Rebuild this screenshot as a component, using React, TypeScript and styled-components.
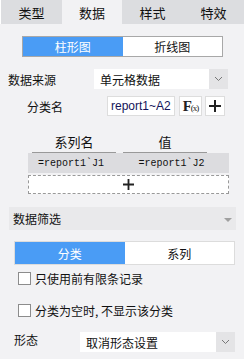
import React from 'react'
import styled, { createGlobalStyle } from 'styled-components'

const GlobalStyle = createGlobalStyle`
    html, body {
        margin: 0;
        padding: 0;
        background: #f2f2f4;
    }
    body {
        font-family: "Noto Sans CJK SC", "Noto Sans", sans-serif;
        font-size: 12px;
        color: #222;
    }
`

const BLUE = '#4a9cf5'

const Page = styled.div`
    width: 244px;
    height: 359px;
    overflow: hidden;
    background: #f2f2f4;
`
const Tabs = styled.div`
    display: flex;
    height: 24px;
    background: #dcdde0;
    border-left: 1px solid #fff;
`
const Tab = styled.div<{ $w: number; $active?: boolean }>`
    width: ${p => p.$w}px;
    display: flex;
    align-items: center;
    justify-content: center;
    font-size: 13px;
    color: #111;
    background: ${p => (p.$active ? '#f2f2f4' : 'transparent')};
`
const Segmented = styled.div<{ $left: number; $width: number; $height: number; $border: string }>`
    display: flex;
    margin-left: ${p => p.$left}px;
    width: ${p => p.$width}px;
    height: ${p => p.$height}px;
    box-sizing: border-box;
    border: 1px solid ${p => p.$border};
`
const SegItem = styled.div<{ $active?: boolean }>`
    flex: 1;
    display: flex;
    align-items: center;
    justify-content: center;
    font-size: 12px;
    background: ${p => (p.$active ? BLUE : '#fff')};
    color: ${p => (p.$active ? '#fff' : '#111')};
`
const Row = styled.div<{ $top: number; $left: number }>`
    display: flex;
    align-items: center;
    height: 20px;
    margin-top: ${p => p.$top}px;
    padding-left: ${p => p.$left}px;
`
const Label = styled.div<{ $w: number; $raise?: number }>`
    width: ${p => p.$w}px;
    font-size: 12px;
    color: #111;
    flex-shrink: 0;
    margin-bottom: ${p => p.$raise || 0}px;
`
const Select = styled.div<{ $w: number }>`
    display: flex;
    width: ${p => p.$w}px;
    height: 20px;
    background: #fff;
    box-sizing: border-box;
`
const SelectText = styled.div`
    flex: 1;
    display: flex;
    align-items: center;
    padding-left: 6px;
    font-size: 12px;
    color: #111;
`
const SelectArrow = styled.div`
    width: 19px;
    display: flex;
    align-items: center;
    justify-content: center;
    background: #e4e4e6;
`
const Input = styled.div`
    width: 68px;
    height: 20px;
    box-sizing: border-box;
    border: 1px solid #ddd;
    background: #fff;
    display: flex;
    align-items: center;
    padding-left: 3px;
    font-family: "Liberation Sans", Arial, sans-serif;
    font-size: 12px;
    color: #14145a;
    white-space: nowrap;
    overflow: hidden;
`
const IconBtn = styled.div<{ $w: number; $gap: number }>`
    width: ${p => p.$w}px;
    height: 20px;
    margin-left: ${p => p.$gap}px;
    box-sizing: border-box;
    border: 1px solid #ddd;
    background: #fff;
    display: flex;
    align-items: center;
    justify-content: center;
`
const Fx = styled.span`
    font-family: "Liberation Serif", "Times New Roman", serif;
    font-size: 15px;
    font-weight: bold;
    color: #222;
    letter-spacing: -1px;
    small {
        font-size: 9px;
        font-weight: normal;
    }
`
const Table = styled.div`
    margin: 18px 0 0 28px;
    width: 201px;
`
const TableHead = styled.div`
    display: flex;
    gap: 7px;
    padding-left: 4px;
    height: 19px;
`
const HeadCell = styled.div`
    width: 84px;
    box-sizing: border-box;
    border-bottom: 1px solid #999;
    display: flex;
    align-items: flex-end;
    justify-content: center;
    padding-bottom: 1px;
    font-size: 13px;
    color: #111;
`
const DataRow = styled.div`
    display: flex;
    height: 20px;
    background: #dcdcdf;
`
const DataCell = styled.div`
    width: 91px;
    padding-left: 10px;
    display: flex;
    align-items: center;
    font-family: "Liberation Mono", "Courier New", monospace;
    font-size: 10px;
    color: #111;
    white-space: nowrap;
`
const AddRow = styled.div`
    margin-top: 2px;
    height: 19px;
    box-sizing: border-box;
    border: 1px dashed #999;
    background: #fff;
    display: flex;
    align-items: center;
    justify-content: center;
`
const Section = styled.div`
    margin: 13px 8px 0 9px;
    height: 23px;
    background: #e9e9eb;
    display: flex;
    align-items: center;
    justify-content: space-between;
    padding: 0 4px;
    font-size: 12px;
    color: #111;
`
const Tri = styled.div`
    width: 0;
    height: 0;
    border-left: 4px solid transparent;
    border-right: 4px solid transparent;
    border-top: 4px solid #a0a0a0;
    margin-top: 2px;
`
const Check = styled.div<{ $top: number }>`
    display: flex;
    align-items: center;
    height: 16px;
    margin-top: ${p => p.$top}px;
    padding-left: 18px;
    font-size: 12px;
    color: #111;
`
const Box = styled.div`
    width: 13px;
    height: 13px;
    box-sizing: border-box;
    border: 1px solid #8c8c8c;
    background: #fff;
    margin-right: 4px;
`

const Chevron = () => (
    <svg width="9" height="6" viewBox="0 0 9 6">
        <path d="M1 1l3.5 3.5L8 1" fill="none" stroke="#777" strokeWidth="1" />
    </svg>
)

const Plus = ({ size }: { size: number }) => (
    <svg width={size} height={size} viewBox="0 0 12 12">
        <path d="M6 0v12M0 6h12" stroke="#222" strokeWidth="2" />
    </svg>
)

export default function App() {
    return (
        <Page>
            <GlobalStyle />
            <Tabs>
                <Tab $w={61}>类型</Tab>
                <Tab $w={60} $active>数据</Tab>
                <Tab $w={61}>样式</Tab>
                <Tab $w={61}>特效</Tab>
            </Tabs>

            <div style={{ paddingTop: 12 }}>
                <Segmented $left={22} $width={201} $height={21} $border="#a8a8a8">
                    <SegItem $active>柱形图</SegItem>
                    <SegItem>折线图</SegItem>
                </Segmented>
            </div>

            <Row $top={12} $left={8}>
                <Label $w={86}>数据来源</Label>
                <Select $w={134}>
                    <SelectText>单元格数据</SelectText>
                    <SelectArrow><Chevron /></SelectArrow>
                </Select>
            </Row>

            <Row $top={7} $left={27}>
                <Label $w={80}>分类名</Label>
                <Input>report1~A2</Input>
                <IconBtn $w={23} $gap={4}><Fx>F<small>(x)</small></Fx></IconBtn>
                <IconBtn $w={20} $gap={3}><Plus size={12} /></IconBtn>
            </Row>

            <Table>
                <TableHead>
                    <HeadCell>系列名</HeadCell>
                    <HeadCell>值</HeadCell>
                </TableHead>
                <DataRow>
                    <DataCell>=report1`J1</DataCell>
                    <DataCell>=report1`J2</DataCell>
                </DataRow>
                <AddRow><Plus size={11} /></AddRow>
            </Table>

            <Section>
                <span>数据筛选</span>
                <Tri />
            </Section>

            <div style={{ paddingTop: 11 }}>
                <Segmented $left={14} $width={221} $height={24} $border="#dcdcdc">
                    <SegItem $active>分类</SegItem>
                    <SegItem>系列</SegItem>
                </Segmented>
            </div>

            <Check $top={5}><Box />只使用前有限条记录</Check>
            <Check $top={16}><Box />分类为空时, 不显示该分类</Check>

            <Row $top={14} $left={14}>
                <Label $w={66} $raise={6}>形态</Label>
                <Select $w={155}>
                    <SelectText>取消形态设置</SelectText>
                    <SelectArrow><Chevron /></SelectArrow>
                </Select>
            </Row>
        </Page>
    )
}
